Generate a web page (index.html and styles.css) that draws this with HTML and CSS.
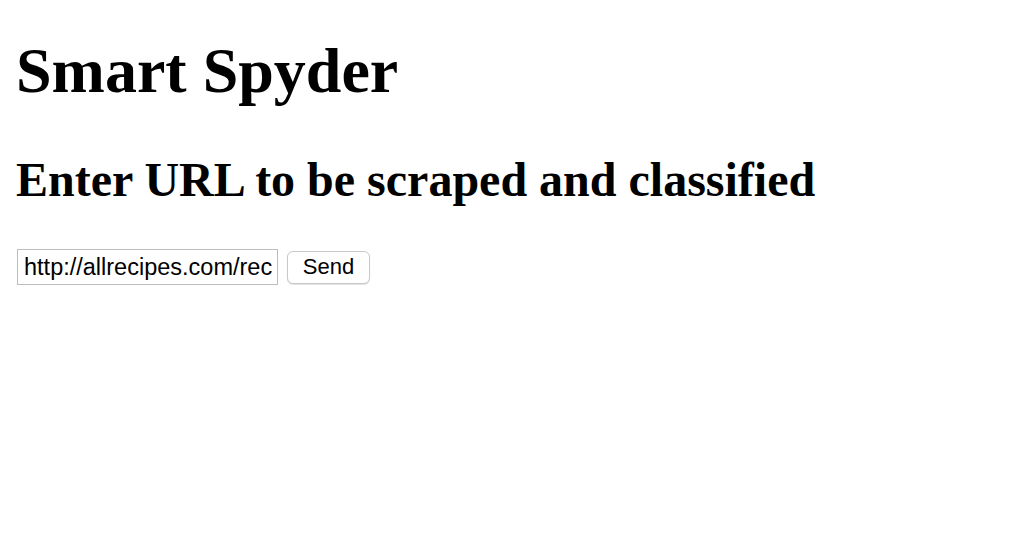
FILE: index.html
```html
<!DOCTYPE html>
<html>
<head>
<meta charset="utf-8">
<link rel="stylesheet" href="styles.css">
</head>
<body>
<h1 class="title">Smart Spyder</h1>
<h2 class="subtitle">Enter URL to be scraped and classified</h2>
<form class="url-form">
  <input class="url-input" type="text" value="http://allrecipes.com/recipe/">
  <button class="send-btn" type="button">Send</button>
</form>
</body>
</html>
```
FILE: styles.css
```css
body {
  margin: 16px;
  font-family: "Liberation Serif", serif;
  color: #000;
  background: #fff;
}
.title {
  font-size: 64px;
  font-weight: bold;
  margin: 0;
  padding-top: 17px;
  line-height: 76px;
}
.subtitle {
  font-size: 48px;
  font-weight: bold;
  margin: 43px 0 0;
  line-height: 56px;
}
.url-form {
  display: flex;
  align-items: center;
  gap: 9px;
  margin-top: 41px;
}
.url-input {
  width: 261px;
  height: 36px;
  box-sizing: border-box;
  margin: 0 0 0 1px;
  padding: 0 4px 0 6px;
  border: 1px solid #bdbdbd;
  font-family: "Liberation Sans", Arial, sans-serif;
  font-size: 23.5px;
  color: #000;
  outline: none;
}
.send-btn {
  height: 33px;
  width: 83px;
  box-sizing: border-box;
  border: 1px solid #c8c8c8;
  border-radius: 6px;
  background: #fff;
  box-shadow: 0 1px 1px rgba(0,0,0,0.12);
  font-family: "Liberation Sans", Arial, sans-serif;
  font-size: 22px;
  color: #000;
  padding: 0;
}
```
